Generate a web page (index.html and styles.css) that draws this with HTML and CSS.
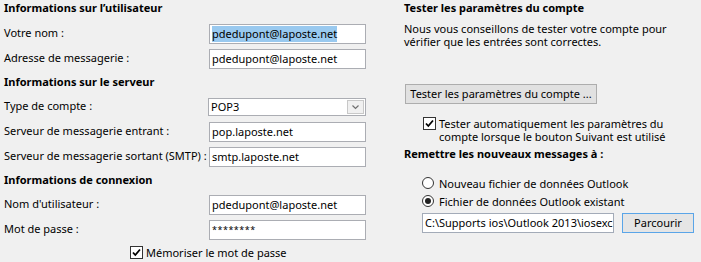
FILE: index.html
```html
<!DOCTYPE html>
<html lang="fr">
<head>
  <meta charset="UTF-8">
  <title>Paramètres du compte</title>
  <link rel="stylesheet" href="styles.css">
</head>
<body>
  <div class="dialog">

    <!-- Colonne gauche -->
    <div class="col-left">
      <div class="heading">Informations sur l’utilisateur</div>
      <div class="row row-first">
        <label>Votre nom :</label>
        <div class="field"><span class="sel">pdedupont@laposte.net</span></div>
      </div>
      <div class="row">
        <label>Adresse de messagerie :</label>
        <div class="field">pdedupont@laposte.net</div>
      </div>

      <div class="heading heading-mid">Informations sur le serveur</div>
      <div class="row row-first">
        <label>Type de compte :</label>
        <div class="field combo">
          <span>POP3</span>
          <span class="combo-arrow">
            <svg width="9" height="6" viewBox="0 0 9 6"><path d="M1.5 1.5 L4.5 4.5 L7.5 1.5" fill="none" stroke="#707070" stroke-width="1.2"/></svg>
          </span>
        </div>
      </div>
      <div class="row">
        <label>Serveur de messagerie entrant :</label>
        <div class="field">pop.laposte.net</div>
      </div>
      <div class="row">
        <label>Serveur de messagerie sortant (SMTP) :</label>
        <div class="field">smtp.laposte.net</div>
      </div>

      <div class="heading heading-mid">Informations de connexion</div>
      <div class="row row-first">
        <label>Nom d'utilisateur :</label>
        <div class="field">pdedupont@laposte.net</div>
      </div>
      <div class="row">
        <label>Mot de passe :</label>
        <div class="field pwd">********</div>
      </div>
      <div class="check-row remember">
        <span class="box">
          <svg width="11" height="11" viewBox="0 0 11 11"><path d="M2 5.5 L4.3 8 L9 2.5" fill="none" stroke="#000" stroke-width="1.8"/></svg>
        </span>
        <span>Mémoriser le mot de passe</span>
      </div>
    </div>

    <!-- Colonne droite -->
    <div class="col-right">
      <div class="heading">Tester les paramètres du compte</div>
      <p class="note">Nous vous conseillons de tester votre compte pour<br>vérifier que les entrées sont correctes.</p>
      <div class="btn test-btn">Tester les paramètres du compte ...</div>
      <div class="check-row auto">
        <span class="box">
          <svg width="11" height="11" viewBox="0 0 11 11"><path d="M2 5.5 L4.3 8 L9 2.5" fill="none" stroke="#000" stroke-width="1.8"/></svg>
        </span>
        <span>Tester automatiquement les paramètres du<br>compte lorsque le bouton Suivant est utilisé</span>
      </div>
      <div class="heading deliver">Remettre les nouveaux messages à :</div>
      <div class="radio-row">
        <span class="radio"></span>
        <span>Nouveau fichier de données Outlook</span>
      </div>
      <div class="radio-row">
        <span class="radio on"></span>
        <span>Fichier de données Outlook existant</span>
      </div>
      <div class="path-row">
        <div class="field path">C:\Supports ios\Outlook 2013\iosexchange.pst</div>
        <div class="btn browse">Parcourir</div>
      </div>
    </div>

  </div>
</body>
</html>
```

FILE: styles.css
```css
body { margin: 0; background: #f0f0f0; color: #000; font-family: "Noto Sans", sans-serif; font-size: 11px; }
.dialog { display: flex; width: 701px; height: 262px; overflow: hidden; }

.col-left { width: 362px; padding-left: 4px; display: flex; flex-direction: column; }
.col-right { padding-left: 38px; display: flex; flex-direction: column; }

.heading { height: 16px; line-height: 16px; font-weight: bold; white-space: nowrap; }
.heading-mid { margin-top: 3px; }

.row { height: 24px; margin-top: 1px; display: flex; align-items: center; justify-content: space-between; }
.row label { white-space: nowrap; margin-bottom: 4px; }
.row-first { margin-top: 6px; }
.col-left .heading-mid + .row-first { margin-top: 5px; }

.field { width: 151px; height: 18px; line-height: 18px; padding: 0 2px; background: #fff; border: 1px solid #abadb3; white-space: nowrap; overflow: hidden; }
.sel { background: #99c9ef; display: inline-block; line-height: 16px; }
.combo { width: 153px; height: 16px; line-height: 16px; display: flex; align-items: center; justify-content: space-between; padding-right: 1px; }
.combo-arrow { width: 15px; height: 12px; border: 1px solid #c8c8c8; background: #f0f0f0; display: flex; align-items: center; justify-content: center; }
.pwd { font-size: 9px; letter-spacing: 0.5px; }

.check-row { display: flex; align-items: flex-start; line-height: 13px; white-space: nowrap; }
.box { width: 11px; height: 11px; border: 1px solid #333; background: #fff; margin-right: 3px; display: flex; flex-shrink: 0; }
.remember { margin-top: 4px; padding-left: 126px; align-items: center; }
.auto { margin-top: 13px; padding-left: 19px; }

.note { margin: 6px 0 0; line-height: 13px; white-space: nowrap; }

.btn { border: 1px solid #adadad; background: #e1e1e1; text-align: center; height: 18px; line-height: 18px; white-space: nowrap; }
.test-btn { width: 190px; margin: 36px 0 0 1px; }

.deliver { margin-top: 3px; }

.radio-row { display: flex; align-items: center; padding-left: 18px; height: 18px; white-space: nowrap; }
.radio { width: 10px; height: 10px; border: 1px solid #333; border-radius: 50%; background: #fff; margin-right: 5px; position: relative; flex-shrink: 0; }
.radio.on::after { content: ""; position: absolute; left: 2px; top: 2px; width: 6px; height: 6px; border-radius: 50%; background: #222; }
.deliver + .radio-row { margin-top: 12px; }

.path-row { display: flex; align-items: center; padding-left: 18px; margin-top: 3px; }
.path { width: 186px; border-color: #a3abb8; }
.browse { width: 70px; margin-left: 8px; border-color: #5aa5e8; background: #e5e5e5; height: 18px; }
```
